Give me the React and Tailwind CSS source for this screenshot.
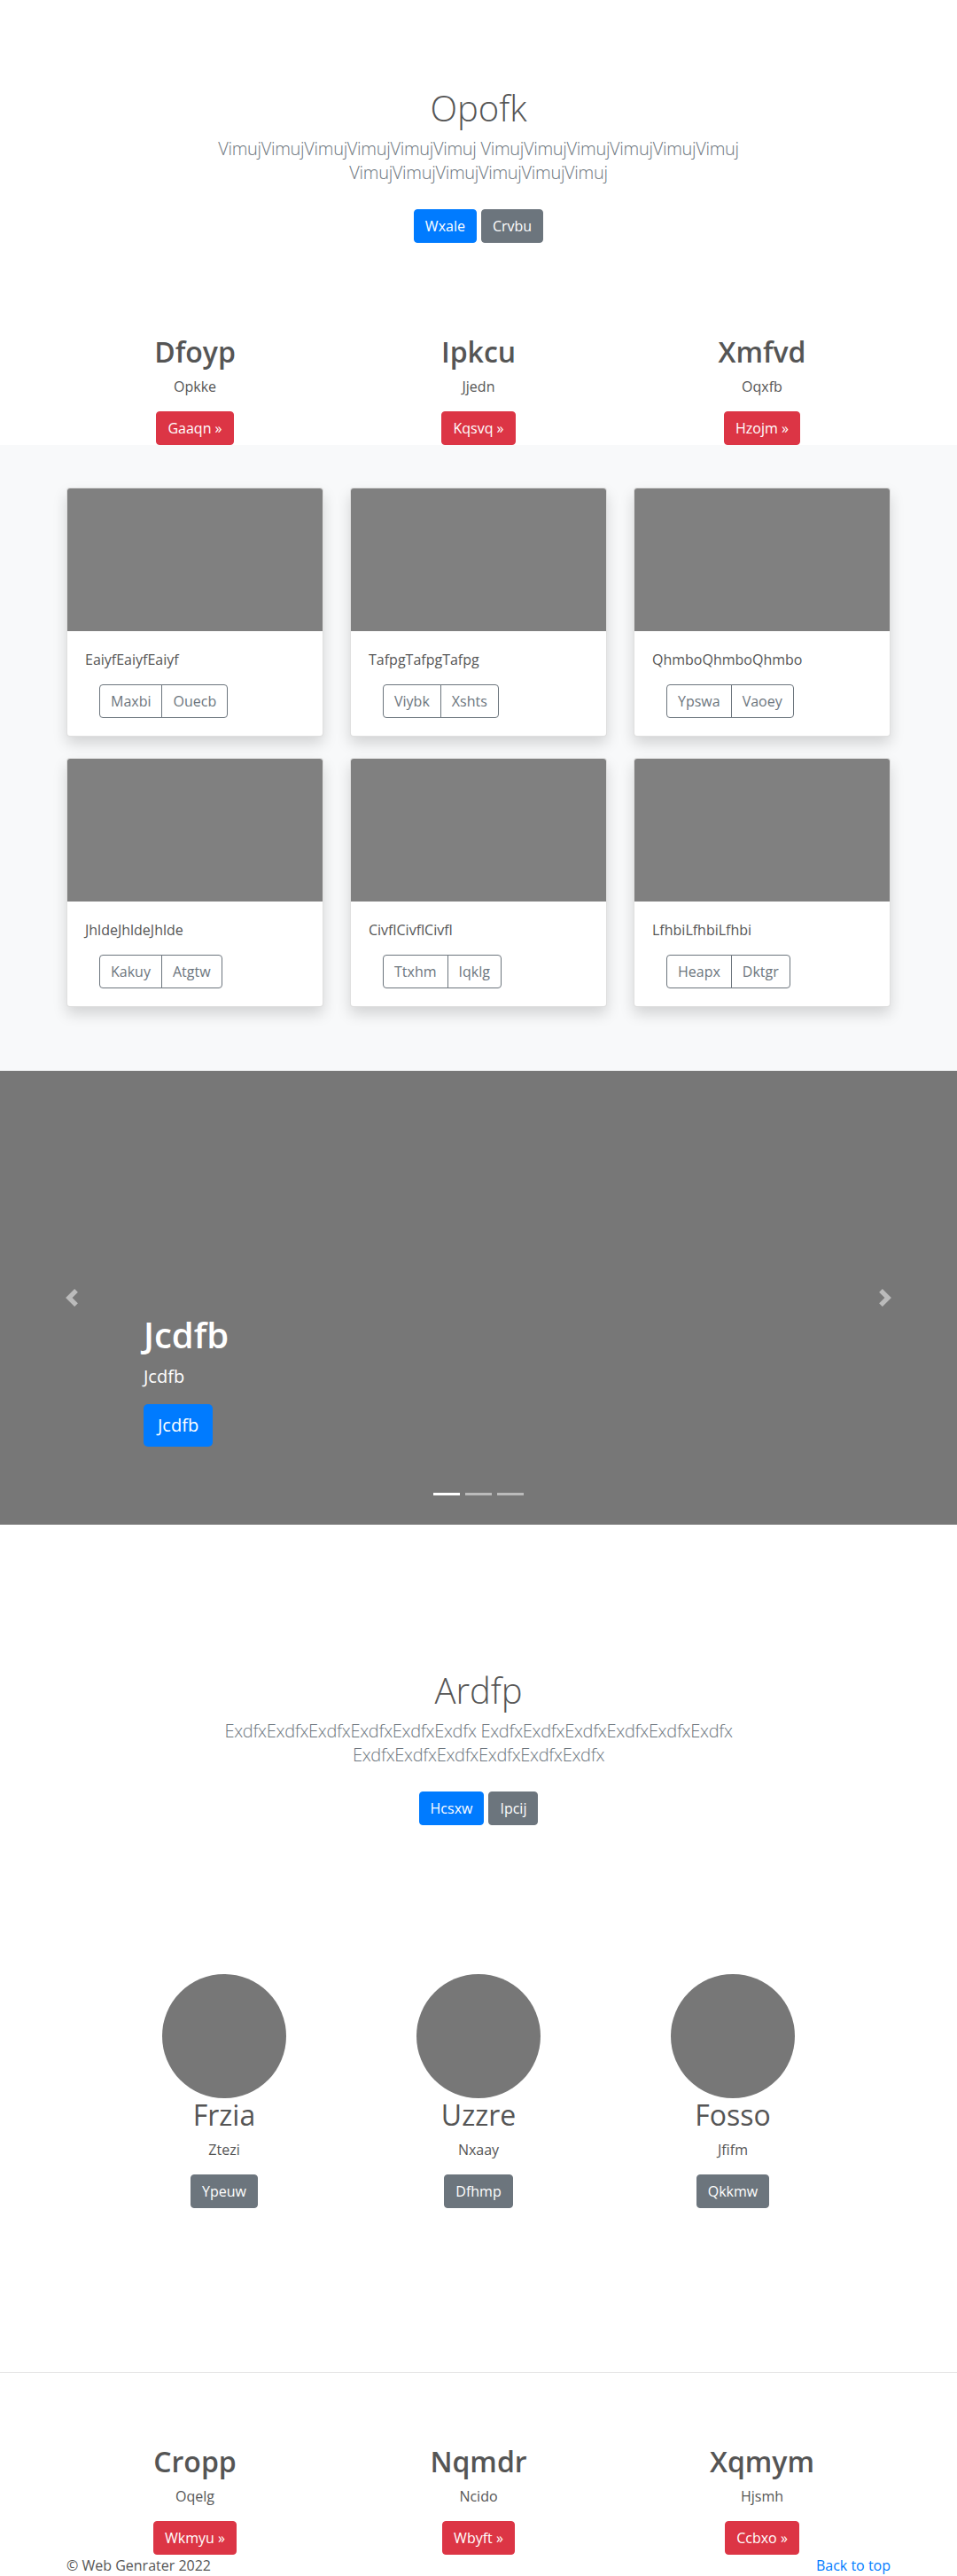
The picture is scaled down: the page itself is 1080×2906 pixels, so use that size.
import React from 'react';

const FONT = "font-['Open_Sans','Segoe_UI',sans-serif]";

const btnColors = {
    primary: 'bg-[#007bff] border-[#007bff] text-white',
    secondary: 'bg-[#6c757d] border-[#6c757d] text-white',
    danger: 'bg-[#dc3545] border-[#dc3545] text-white',
};

const Btn = ({ variant = 'primary', children, className = '' }) => (
    <a
        href="#"
        className={`inline-block rounded-[4px] border px-3 py-[6px] text-[16px] leading-6 ${btnColors[variant]} ${className}`}
    >
        {children}
    </a>
);

const Hero = ({ title, lead, primary, secondary, className = '' }) => (
    <section className={`text-center ${className}`}>
        <h1 className="text-[40px] leading-[48px] font-light text-[#555]">{title}</h1>
        <p className="mx-auto mt-2 max-w-[700px] text-[20px] leading-[27px] font-light tracking-[-0.3px] text-[#6c757d]">
            {lead}
        </p>
        <div className="mt-7 flex justify-center gap-[5px]">
            <Btn variant="primary">{primary}</Btn>
            <Btn variant="secondary">{secondary}</Btn>
        </div>
    </section>
);

const FeatureRow = ({ items, className = '' }) => (
    <div className={`mx-auto grid w-[960px] grid-cols-3 ${className}`}>
        {items.map((f) => (
            <div key={f.title} className="flex flex-col items-center px-[15px] text-center">
                <h2 className="text-[32px] leading-[38px] font-semibold text-[#555]">{f.title}</h2>
                <p className="mt-2 text-[16px] leading-6 text-[#555]">{f.text}</p>
                <Btn variant="danger" className="mt-4">{f.btn} &raquo;</Btn>
            </div>
        ))}
    </div>
);

const cards = [
    { text: 'EaiyfEaiyfEaiyf', a: 'Maxbi', b: 'Ouecb' },
    { text: 'TafpgTafpgTafpg', a: 'Viybk', b: 'Xshts' },
    { text: 'QhmboQhmboQhmbo', a: 'Ypswa', b: 'Vaoey' },
    { text: 'JhldeJhldeJhlde', a: 'Kakuy', b: 'Atgtw' },
    { text: 'CivflCivflCivfl', a: 'Ttxhm', b: 'Iqklg' },
    { text: 'LfhbiLfhbiLfhbi', a: 'Heapx', b: 'Dktgr' },
];

const people = [
    { name: 'Frzia', text: 'Ztezi', btn: 'Ypeuw' },
    { name: 'Uzzre', text: 'Nxaay', btn: 'Dfhmp' },
    { name: 'Fosso', text: 'Jfifm', btn: 'Qkkmw' },
];

const Card = ({ text, a, b }) => (
    <div className="overflow-hidden rounded-[4px] border border-black/[0.125] bg-white shadow-[0_8px_16px_rgba(0,0,0,0.15)]">
        <div className="h-[161px] bg-[#808080]" />
        <div className="p-5">
            <p className="text-[16px] leading-6 text-[#555]">{text}</p>
            <div className="mt-4 ml-4 flex">
                <a href="#" className="rounded-l-[4px] border border-[#6c757d] px-3 py-[6px] text-[16px] leading-6 text-[#6c757d]">{a}</a>
                <a href="#" className="-ml-px rounded-r-[4px] border border-[#6c757d] px-3 py-[6px] text-[16px] leading-6 text-[#6c757d]">{b}</a>
            </div>
        </div>
    </div>
);

const Chevron = ({ dir }) => (
    <svg width="20" height="20" viewBox="0 0 8 8" fill="#fff">
        {dir === 'left'
            ? <path d="M5.25 0l-4 4 4 4 1.5-1.5L4.25 4l2.5-2.5L5.25 0z" />
            : <path d="M2.75 0l-1.5 1.5L3.75 4l-2.5 2.5L2.75 8l4-4-4-4z" />}
    </svg>
);

export default function App() {
    return (
        <div className={`${FONT} bg-white text-[16px] leading-6 text-[#555]`}>
            <Hero
                className="pt-[98px]"
                title="Opofk"
                lead="VimujVimujVimujVimujVimujVimuj VimujVimujVimujVimujVimujVimuj VimujVimujVimujVimujVimujVimuj"
                primary="Wxale"
                secondary="Crvbu"
            />

            <FeatureRow
                className="mt-[104px]"
                items={[
                    { title: 'Dfoyp', text: 'Opkke', btn: 'Gaaqn' },
                    { title: 'Ipkcu', text: 'Jjedn', btn: 'Kqsvq' },
                    { title: 'Xmfvd', text: 'Oqxfb', btn: 'Hzojm' },
                ]}
            />

            {/* Album cards */}
            <section className="bg-[#f8f9fa] py-12">
                <div className="mx-auto grid w-[930px] grid-cols-3 gap-x-[30px] gap-y-6 pb-6">
                    {cards.map((c) => (
                        <Card key={c.text} {...c} />
                    ))}
                </div>
            </section>

            {/* Carousel */}
            <section className="relative h-[512px] bg-[#777]">
                <div className="absolute inset-y-0 left-0 flex w-[15%] items-center justify-center opacity-50">
                    <Chevron dir="left" />
                </div>
                <div className="absolute inset-y-0 right-0 flex w-[15%] items-center justify-center opacity-50">
                    <Chevron dir="right" />
                </div>
                <div className="absolute top-[274px] right-[15%] left-[15%] text-white">
                    <h1 className="text-[40px] leading-[48px] font-semibold">Jcdfb</h1>
                    <p className="mt-2 text-[20px] leading-[30px]">Jcdfb</p>
                    <a href="#" className="mt-4 inline-block rounded-[5px] bg-[#007bff] px-4 py-[9px] text-[20px] leading-[30px] text-white">
                        Jcdfb
                    </a>
                </div>
                <div className="absolute bottom-[33px] left-0 right-0 flex justify-center gap-[6px]">
                    <span className="h-[3px] w-[30px] bg-white" />
                    <span className="h-[3px] w-[30px] bg-white opacity-50" />
                    <span className="h-[3px] w-[30px] bg-white opacity-50" />
                </div>
            </section>

            <Hero
                className="pt-[163px]"
                title="Ardfp"
                lead="ExdfxExdfxExdfxExdfxExdfxExdfx ExdfxExdfxExdfxExdfxExdfxExdfx ExdfxExdfxExdfxExdfxExdfxExdfx"
                primary="Hcsxw"
                secondary="Ipcij"
            />

            {/* Team */}
            <div className="mx-auto mt-[168px] grid w-[861px] grid-cols-3">
                {people.map((p) => (
                    <div key={p.name} className="flex flex-col items-center text-center">
                        <div className="h-[140px] w-[140px] rounded-full bg-[#777]" />
                        <h2 className="text-[32px] leading-[38px] font-normal text-[#555]">{p.name}</h2>
                        <p className="mt-2 text-[16px] leading-6 text-[#555]">{p.text}</p>
                        <Btn variant="secondary" className="mt-4">{p.btn}</Btn>
                    </div>
                ))}
            </div>

            <hr className="mt-[185px] border-0 border-t border-black/10" />

            <FeatureRow
                className="mt-[81px]"
                items={[
                    { title: 'Cropp', text: 'Oqelg', btn: 'Wkmyu' },
                    { title: 'Nqmdr', text: 'Ncido', btn: 'Wbyft' },
                    { title: 'Xqmym', text: 'Hjsmh', btn: 'Ccbxo' },
                ]}
            />

            <footer className="mx-auto flex w-[930px] justify-between pb-4 text-[16px] leading-6">
                <p className="text-[#555]">&copy; Web Genrater 2022</p>
                <a href="#" className="text-[#007bff]">Back to top</a>
            </footer>
        </div>
    );
}
